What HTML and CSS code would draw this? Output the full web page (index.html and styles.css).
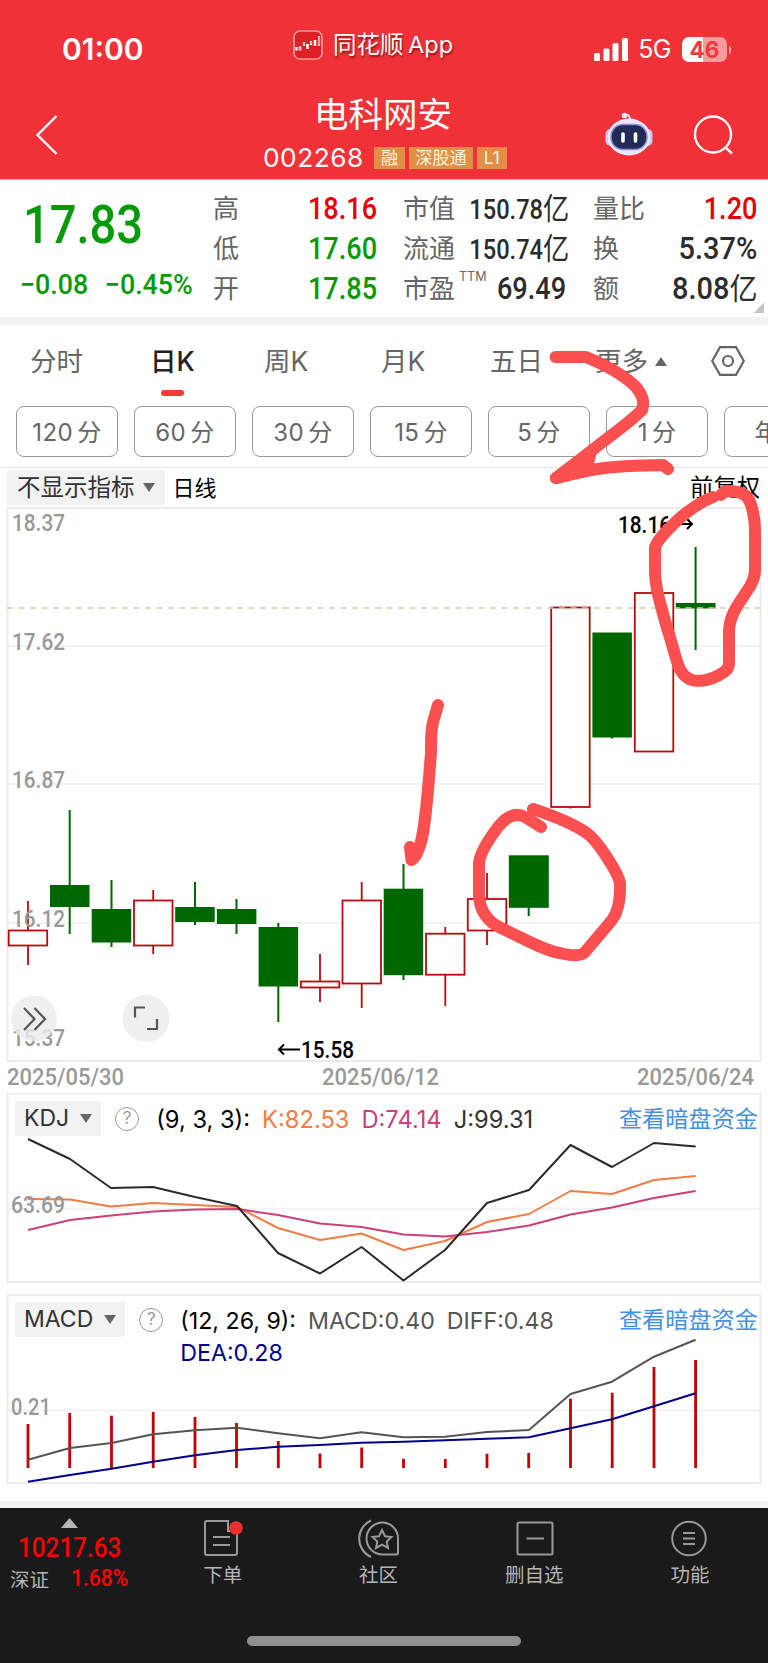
FILE: index.html
```html
<!DOCTYPE html>
<html lang="zh-CN">
<head>
    <meta charset="UTF-8">
    <title>电科网安 002268</title>
    <link rel="stylesheet" href="styles.css">
</head>
<body>
<div class="page">
    <!-- 顶部：状态栏 + 标题 -->
    <div class="header">
        <div class="status">
            <span class="time">01:00</span>
            <div class="app">
                <svg width="30" height="30" viewBox="0 0 30 30">
                    <rect x="1" y="1" width="28" height="28" rx="6" fill="#dd2026" stroke="#f79a9c" stroke-width="1.6"/>
                    <path d="M3.500 17v3.500M11 12v4M18 11v4M26 6v10" stroke="#fff" stroke-width="2.200"/>
                    <path d="M7 16.500v4M14.500 14v5M22 10v6" stroke="#fff" stroke-width="2.600"/>
                    <path d="M7 18v2M11 13v2M18 12v2M26 7v8" stroke="#dd2026" stroke-width=".8"/>
                </svg>
                <span>同花顺 App</span>
            </div>
            <div class="net">
                <svg width="35" height="23" viewBox="0 0 35 23" fill="#fff">
                    <rect x="0" y="15" width="6" height="8" rx="1.500"/>
                    <rect x="9.500" y="10.500" width="6" height="12.500" rx="1.500"/>
                    <rect x="18.500" y="5" width="6" height="18" rx="1.500"/>
                    <rect x="28" y="0" width="6" height="23" rx="1.500"/>
                </svg>
                <span class="g5">5G</span>
                <span class="battery">46</span>
            </div>
        </div>
        <div class="nav">
            <svg class="back" width="24" height="42" viewBox="0 0 24 42"><path d="M21.500 2L2.500 21l19 19" fill="none" stroke="#fff" stroke-width="2.400"/></svg>
            <div class="title">
                <h1>电科网安</h1>
                <p><span class="code">002268</span><i>融</i><i>深股通</i><i>L1</i></p>
            </div>
            <div class="tools">
                <svg width="50" height="44" viewBox="0 0 50 44">
                    <path d="M21 3q5-1 5 5" fill="none" stroke="#e4e0fa" stroke-width="2"/>
                    <circle cx="20.500" cy="3.500" r="2.800" fill="#f3f0ff"/>
                    <rect x="1.500" y="17" width="10" height="17" rx="5" fill="#c9c8f5"/>
                    <rect x="38.500" y="17" width="10" height="17" rx="5" fill="#c9c8f5"/>
                    <ellipse cx="25" cy="25" rx="21.500" ry="18.500" fill="#ebe8fb"/>
                    <rect x="7" y="12.500" width="36" height="25" rx="12" fill="#222b54" stroke="#8e8bdc" stroke-width="1.500"/>
                    <path d="M19 22v7M31.500 22v7" stroke="#fff" stroke-width="3.600" stroke-linecap="round"/>
                </svg>
                <svg width="42" height="42" viewBox="0 0 42 42" fill="none" stroke="#fff" stroke-width="2.400">
                    <circle cx="20" cy="20.500" r="18"/><path d="M32 33l7 6.500"/>
                </svg>
            </div>
        </div>
    </div>

    <!-- 行情 -->
    <div class="quote">
        <div class="price">
            <b>17.83</b>
            <p><span>−0.08</span><span>−0.45%</span></p>
        </div>
        <ul class="c1">
            <li>高<em class="red">18.16</em></li>
            <li>低<em class="green">17.60</em></li>
            <li>开<em class="green">17.85</em></li>
        </ul>
        <ul class="c2">
            <li>市值<em class="small">150.78<u>亿</u></em></li>
            <li>流通<em class="small">150.74<u>亿</u></em></li>
            <li>市盈<sup>TTM</sup><em>69.49</em></li>
        </ul>
        <ul class="c3">
            <li>量比<em class="red">1.20</em></li>
            <li>换<em class="wide">5.37%</em></li>
            <li>额<em class="wide">8.08<u>亿</u></em></li>
        </ul>
    </div>

    <!-- 周期 -->
    <div class="tabs">
        <span>分时</span><span class="current">日K</span><span>周K</span><span>月K</span><span>五日</span>
        <span class="more">更多<svg width="12" height="9" viewBox="0 0 12 9"><path d="M6 0l6 9H0z" fill="#666"/></svg></span>
        <svg class="set" width="34" height="30" viewBox="0 0 34 30" fill="none" stroke="#666" stroke-width="2.200">
            <path d="M9 1.200h16L32.800 15 25 28.800H9L1.200 15z"/><circle cx="17" cy="15" r="5"/>
        </svg>
    </div>
    <div class="mins">
        <span>120 分</span><span>60 分</span><span>30 分</span><span>15 分</span><span>5 分</span><span>1 分</span><span>年K</span>
    </div>
    <div class="bar">
        <span class="select">不显示指标<s></s></span>
        <span class="line">日线</span>
        <span class="fq">前复权</span>
    </div>

    <!-- K线 -->
    <svg class="kline" width="768" height="586" viewBox="0 507 768 586">
        <path class="grid" d="M7 646H761M7 784H761M7 923H761"/>
        <rect class="frame" x="7.500" y="508" width="753" height="553"/>
        <g class="down">
            <path d="M69.700 810V934M111.500 880V947M195 882V925M236.500 899V934M278.300 923V1022M403.500 864V980M528.700 860V916M612.200 640V738.500M695.600 547V650"/>
            <rect x="50" y="885" width="39.500" height="22"/>
            <rect x="91.700" y="909" width="39.500" height="33.500"/>
            <rect x="175.200" y="907" width="39.500" height="15"/>
            <rect x="216.900" y="909" width="39.500" height="15"/>
            <rect x="258.600" y="927" width="39.500" height="59.500"/>
            <rect x="383.700" y="888.700" width="39.500" height="86.500"/>
            <rect x="508.800" y="855.300" width="40" height="52.500"/>
            <rect x="592.400" y="632.500" width="39.500" height="105"/>
            <rect x="675.800" y="603" width="39.700" height="5.500"/>
        </g>
        <g class="up">
            <path d="M28 901V930M28 946V965M153.200 890V900M153.200 946V954M320 954V981M320 988V1002M361.700 882V900M361.700 984V1008M445.300 927V933M445.300 975V1006M487 873V898M487 931V945M570.400 807V808.500"/>
            <rect x="8.700" y="930.500" width="38.500" height="15"/>
            <rect x="134" y="900.500" width="38.500" height="45"/>
            <rect x="300.800" y="981.500" width="38.500" height="6"/>
            <rect x="342.500" y="900.500" width="38.500" height="83"/>
            <rect x="426" y="933.700" width="38.500" height="41"/>
            <rect x="467.800" y="899" width="38.500" height="31.500"/>
            <rect x="551.200" y="607.500" width="38.500" height="199.500"/>
            <rect x="634.800" y="593" width="38.500" height="158.500"/>
        </g>
        <path d="M7 608H761" stroke="#d6cbb0" stroke-width="1.300" stroke-dasharray="6 5.500"/>
        <g class="axis">
            <text x="12" y="531" textLength="53" lengthAdjust="spacingAndGlyphs">18.37</text>
            <text x="12" y="650" textLength="53" lengthAdjust="spacingAndGlyphs">17.62</text>
            <text x="12" y="788" textLength="53" lengthAdjust="spacingAndGlyphs">16.87</text>
            <text x="12" y="926.500" textLength="53" lengthAdjust="spacingAndGlyphs">16.12</text>
            <text x="12" y="1045.500" textLength="53" lengthAdjust="spacingAndGlyphs">15.37</text>
            <text x="7" y="1084.500" textLength="117" lengthAdjust="spacingAndGlyphs">2025/05/30</text>
            <text x="322" y="1084.500" textLength="117" lengthAdjust="spacingAndGlyphs">2025/06/12</text>
            <text x="637" y="1084.500" textLength="117" lengthAdjust="spacingAndGlyphs">2025/06/24</text>
        </g>
        <g class="mark">
            <text x="301" y="1058" textLength="53" lengthAdjust="spacingAndGlyphs">15.58</text>
            <text x="618" y="532.500" textLength="53" lengthAdjust="spacingAndGlyphs">18.16</text>
            <path d="M300 1049.500H279M284 1044.500l-5 5 5 5M672 524H692M687 519l5 5-5 5"/>
        </g>
        <!-- 左下角按钮 -->
        <g class="btn">
            <circle cx="34" cy="1018.500" r="23"/><circle cx="146" cy="1018.500" r="23.500"/>
            <path d="M24 1008l10.500 11L24 1030M34.500 1008l10.500 11-10.500 11M135 1017.500V1007.500H145M147 1029H157V1019"/>
        </g>
    </svg>

    <!-- KDJ -->
    <div class="panel kdj">
        <div class="head">
            <span class="select">KDJ<s></s></span><span class="ask">?</span>
            <div class="vals"><span>(9, 3, 3):</span><span class="k">K:82.53</span><span class="d">D:74.14</span><span class="j">J:99.31</span></div>
            <a>查看暗盘资金</a>
        </div>
        <svg width="768" height="190" viewBox="0 1093 768 190">
            <path class="grid" d="M7 1209H761"/>
            <rect class="frame" x="7.500" y="1093.500" width="753" height="188.500"/>
            <g class="curve">
                <polyline stroke="#f47b43" points="28,1199 70,1199.500 111,1206.500 153,1203 195,1205 237,1207 278,1228 320,1240 361.500,1233.500 403.500,1250 445,1241 487,1222 529,1214 570.500,1191 612,1194 654,1180 695.600,1176"/>
                <polyline stroke="#cc3f78" points="28,1230 70,1220 111,1215.500 153,1211.500 195,1209.500 237,1209 278,1215 320,1223.500 361.500,1227 403.500,1234.500 445,1236.500 487,1232 529,1225.500 570.500,1214.500 612,1207.500 654,1198 695.600,1191"/>
                <polyline stroke="#2b2b2b" points="28,1139 70,1159 111,1188 153,1187 195,1197 237,1206 278,1253 320,1273.500 361.500,1247 403.500,1280.500 445,1250 487,1203 529,1190 570.500,1145 612,1167 654,1143 695.600,1146.500"/>
            </g>
            <g class="axis"><text x="11" y="1213" textLength="54" lengthAdjust="spacingAndGlyphs">63.69</text></g>
        </svg>
    </div>

    <!-- MACD -->
    <div class="panel macd">
        <div class="head">
            <span class="select">MACD<s></s></span><span class="ask">?</span>
            <div class="vals"><span>(12, 26, 9):</span><span class="m">MACD:0.40</span><span class="m">DIFF:0.48</span><br><span class="dea">DEA:0.28</span></div>
            <a>查看暗盘资金</a>
        </div>
        <svg width="768" height="190" viewBox="0 1294 768 190">
            <path class="grid" d="M7 1410.500H761"/>
            <rect class="frame" x="7.500" y="1295" width="753" height="188"/>
            <path d="M28 1424V1468M69.700 1413V1468M111.500 1415.700V1468M153.200 1412V1468M195 1417V1468M236.500 1423V1468M278.300 1441V1468M320 1453.500V1468M361.700 1447.500V1468M403.500 1458.700V1468M445.300 1459V1468M487 1453.700V1468M528.700 1453V1468M570.500 1398.700V1468M612.200 1392.700V1468M654 1367V1468M695.600 1360V1468" stroke="#c40000" stroke-width="2.800"/>
            <g class="curve">
                <polyline stroke="#555" points="28,1459.700 70,1448 111.500,1443 153,1434.300 195,1430.300 237,1427.700 278,1433.300 320,1438.300 361.500,1432.300 403.500,1437.300 445,1436.700 487,1432 529,1430 570.500,1394 612,1381.700 654,1356.700 695.600,1339.700"/>
                <polyline stroke="#00008b" points="28,1481.700 70,1475 111.500,1468.700 153,1461.700 195,1455.300 237,1450 278,1446.700 320,1445 361.500,1442.700 403.500,1441.700 445,1440.300 487,1438.700 529,1437.300 570.500,1428.300 612,1419.300 654,1406.300 695.600,1393.300"/>
            </g>
            <g class="axis"><text x="11" y="1414.500" textLength="40" lengthAdjust="spacingAndGlyphs">0.21</text></g>
        </svg>
    </div>

    <!-- 底部 -->
    <div class="footer">
        <div class="index">
            <svg width="17" height="10" viewBox="0 0 17 10"><path d="M8.500 0L17 10H0z" fill="#b5b5b5"/></svg>
            <b>10217.63</b>
            <p>深证<b>1.68%</b></p>
        </div>
        <div class="item">
            <svg width="42" height="40" viewBox="0 0 42 40">
                <path d="M25 3H5Q3 3 3 5V35Q3 37 5 37H33Q35 37 35 35V13H26V3zM11 19H28M11 27H28"/>
                <circle cx="34" cy="10" r="6.800" fill="#ee2f30" stroke="none"/>
            </svg>
            <span>下单</span>
        </div>
        <div class="item">
            <svg width="42" height="40" viewBox="0 0 42 40">
                <path d="M24.500 4.500a16 16 0 1 0 0 32H38q2 0 2-2V20.500a15.500 16 0 0 0-15.500-16zM13 2.500a20 20 0 0 0 0 36.500"/>
                <path d="M24 12l3 6.200 6.500.8-4.800 4.500 1.300 6.500-6-3.300-6 3.300 1.300-6.500-4.800-4.500 6.500-.8z"/>
            </svg>
            <span>社区</span>
        </div>
        <div class="item">
            <svg width="42" height="40" viewBox="0 0 42 40"><path d="M6 4.500H38Q39.500 4.500 39.500 6V35Q39.500 36.500 38 36.500H6Q4.500 36.500 4.500 35V6Q4.500 4.500 6 4.500zM13.500 20.500H31"/></svg>
            <span>删自选</span>
        </div>
        <div class="item">
            <svg width="42" height="40" viewBox="0 0 42 40"><circle cx="20" cy="20.500" r="16.800"/><path d="M14 15H26M14 20.500H26M14 26H26"/></svg>
            <span>功能</span>
        </div>
        <div class="home"></div>
    </div>

    <!-- 手绘标注 -->
    <svg class="pen" width="768" height="1663" viewBox="0 0 768 1663">
        <path d="M555.500 357H586Q620 371 636 387C646 400 643 405 642 410C628 424 606 439 595 448L556 478C585 472 590 466 663 465L668 469"/>
        <path d="M556 478L590 456L586 468z"/>
        <path d="M438 705C432 726 431 724 431 753C428 790 425 835 419 848Q416 857 411.500 860L410 847"/>
        <path d="M541 827L525 817Q512 810 498 827Q480 851 479 863V895Q480 918 501 928C525 939 545 951 560 953Q580 958 585 952L612 920Q621 908 620 883Q619 876 608 859Q596 840 588 834C575 824 551 815 533 809"/>
        <path d="M721 495L725 491Q746 490 750 502Q755 515 755 533V570Q755 580 747 591C738 605 729 615 729 633V663Q729 669 724 672C708 683 692 683 685 676C677 669 676 655 667 628C661 606 655 588 655 570V548C656 540 685 508 713 497"/>
    </svg>
</div>
</body>
</html>
```
FILE: styles.css
```css
* {
    margin: 0;
    padding: 0;
    box-sizing: border-box;
}

body {
    width: 768px;
    font-family: Inter, "Noto Sans CJK SC", sans-serif;
    background: #fff;
}

ul {
    list-style: none;
}

i, em {
    font-style: normal;
}

u, s {
    text-decoration: none;
}

svg {
    display: block;
    flex-shrink: 0;
}

.page {
    position: relative;
    width: 768px;
    height: 1663px;
    overflow: hidden;
    white-space: nowrap;
}

/* 顶部 */
.header {
    height: 180px;
    padding-top: 28px;
    background: #f13138;
    color: #fff;
    border-bottom: 1px solid #dcb0a8;
}

.status {
    display: flex;
    height: 40px;
    padding: 0 38px 0 62px;
    line-height: 40px;
}

.time {
    width: 231px;
    font-size: 30px;
    font-weight: 600;
    letter-spacing: 0;
    line-height: 43px;
}

.app {
    display: flex;
    gap: 10px;
    padding-top: 2px;
    font-size: 23.5px;
    line-height: 30px;
    word-spacing: -2px;
    text-shadow: 1px 2px 2px rgba(80, 0, 0, .6);
}

.net {
    display: flex;
    align-items: center;
    height: 42px;
    margin-left: auto;
}

.g5 {
    margin-left: 9px;
    font-size: 25px;
    letter-spacing: -.5px;
    line-height: 44px;
}

.battery {
    position: relative;
    width: 45px;
    height: 25px;
    margin-left: 11px;
    border-radius: 7px;
    background: linear-gradient(90deg, #fff 46%, #f99a9d 46%);
    color: #ee3a40;
    font-size: 22.5px;
    font-weight: 700;
    line-height: 25px;
    text-align: center;
}

.battery::after {
    content: "";
    position: absolute;
    right: -4px;
    top: 9px;
    width: 2px;
    height: 8px;
    border-radius: 0 3px 3px 0;
    background: #f99a9d;
}

.net {
    margin-right: 3px;
}

.nav {
    display: flex;
    height: 111px;
    padding: 0 33px 0 35px;
}

.back {
    margin-top: 46px;
}

.title {
    flex: 1;
    padding: 25px 0 0 204px;
}

.title h1 {
    padding-left: 51px;
    font-size: 34.5px;
    font-weight: 400;
    line-height: 44px;
}

.title p {
    display: flex;
    align-items: center;
    height: 22px;
    margin-top: 9px;
}

.code {
    width: 108px;
    font-size: 26.3px;
    letter-spacing: .5px;
}

.title i {
    height: 22px;
    margin: 1px 4px 0 0;
    padding: 0 6px;
    background: #e28f46;
    font-size: 17.2px;
    line-height: 21px;
    color: #fff3e0;
}

.title i:first-of-type {
    margin-left: 3px;
    padding: 0 7px;
}

.title i:last-child {
    padding: 0 7px;
}

.tools {
    display: flex;
    gap: 39px;
    padding-top: 44px;
}

.tools svg:last-child {
    margin-top: 2px;
}

/* 行情 */
.quote {
    position: relative;
    display: flex;
    height: 145px;
    padding: 10px 11px 0 22px;
    border-bottom: 8px solid #f4f4f4;
    color: #666;
    font-size: 26px;
}

/* 右下角小三角 */
.quote::after {
    content: "";
    position: absolute;
    right: 4px;
    bottom: 4px;
    width: 10px;
    height: 10px;
    background: linear-gradient(135deg, transparent 50%, #c4c4c4 50%);
}

.price {
    width: 191px;
    padding-top: 9px;
    color: #069a0a;
    font-family: Roboto, sans-serif;
}

.price b {
    display: block;
    margin-left: 1px;
    font-size: 53.5px;
    font-weight: 500;
    line-height: 52px;
    transform: scaleX(.88);
    transform-origin: left;
}

.price p {
    display: flex;
    gap: 17px;
    margin-top: 19px;
    margin-left: -2px;
    font-size: 27.5px;
    line-height: 30px;
    font-weight: 500;
    transform: scaleX(.975);
    transform-origin: left;
}

.quote ul {
    width: 164px;
}

.quote .c2 {
    width: 163px;
    margin-left: 26px;
}

.quote .c3 {
    width: 164px;
    margin-left: 27px;
}

.quote li {
    position: relative;
    display: flex;
    height: 40px;
    line-height: 38px;
}

.quote em {
    margin-left: auto;
    color: #2c2c2c;
    font-family: Roboto, "Noto Sans CJK SC", sans-serif;
    font-size: 31px;
    font-weight: 500;
    transform: scaleX(.875);
    transform-origin: right;
}

.quote em.small {
    margin-right: 1px;
    font-size: 27px;
}

.quote em.wide {
    transform: scaleX(.935);
}

.quote u {
    font-size: 30px;
    font-weight: 400;
}

.quote em.red {
    color: #e80008;
}

.quote em.green {
    color: #069a0a;
}

.quote sup {
    position: absolute;
    left: 56px;
    top: -11px;
    font-size: 12.5px;
    line-height: 36px;
}

/* 周期 */
.tabs {
    position: relative;
    display: flex;
    height: 81px;
    padding-left: 30px;
    color: #666;
    font-size: 26.5px;
    line-height: 72px;
}

.tabs span {
    width: 114px;
}

.tabs span:first-child {
    width: 120px;
}

.tabs .current {
    position: relative;
    color: #222;
    font-weight: 500;
}

.tabs .current::after {
    content: "";
    position: absolute;
    left: 11px;
    top: 65px;
    width: 23px;
    height: 6px;
    border-radius: 3px;
    background: #fa3932;
}

.tabs span:nth-child(3) {
    width: 117px;
}

.tabs span:nth-child(4) {
    width: 109px;
}

.tabs span:nth-child(5) {
    width: 105px;
}

.tabs .more {
    display: flex;
    align-items: center;
    gap: 7px;
    height: 72px;
    width: 116px;
}

.set {
    margin-top: 21px;
}

.mins {
    display: flex;
    gap: 16px;
    height: 62px;
    padding-left: 16px;
    overflow: hidden;
    border-bottom: 1px solid #e6e6e6;
}

.mins span {
    flex: 0 0 102px;
    height: 51px;
    border: 1px solid #999;
    border-radius: 8px;
    color: #666;
    font-size: 24px;
    letter-spacing: .4px;
    word-spacing: -3px;
    line-height: 51px;
    text-align: center;
}

.bar {
    display: flex;
    height: 39px;
    padding: 2px 8px 0 7px;
    font-size: 22.5px;
    line-height: 37px;
}

.select {
    display: flex;
    align-items: center;
    gap: 8px;
    height: 35px;
    padding: 0 10px;
    background: #f2f2f2;
    color: #333;
    font-size: 23.5px;
}

.select s {
    border: 6px solid transparent;
    border-top: 9px solid #666;
    border-bottom: 0;
}

.line {
    margin-left: 8px;
    font-size: 22px;
}

.fq {
    margin-left: auto;
    font-size: 23.3px;
    line-height: 35px;
}

/* 图表 */
.grid {
    fill: none;
    stroke: #eeeff1;
    stroke-width: 1.5;
}

.frame {
    fill: none;
    stroke: #ebebeb;
    stroke-width: 2;
}

.down {
    fill: #006600;
    stroke: none;
}

.down path {
    stroke: #006600;
    stroke-width: 2;
}

.up {
    fill: #fff;
    stroke: #b80a0e;
    stroke-width: 1.8;
}

.axis {
    fill: #999;
    font-family: Roboto, sans-serif;
    font-size: 23.5px;
    font-weight: 500;
    font-kerning: none;
}

.mark {
    fill: #000;
    font-family: Roboto, sans-serif;
    font-size: 23.5px;
    font-weight: 500;
    font-kerning: none;
}

.mark path {
    fill: none;
    stroke: #000;
    stroke-width: 2;
}

.btn {
    fill: #ebebeb;
    fill-opacity: .8;
}

.btn path {
    fill: none;
    stroke: #555;
    stroke-width: 2.2;
}

.curve {
    fill: none;
    stroke-width: 2;
    stroke-linejoin: round;
}

/* 指标面板 */
.panel {
    position: relative;
    height: 190px;
}

.macd {
    margin-top: 11px;
}

.head {
    position: absolute;
    left: 15px;
    top: 8px;
    width: 743px;
    display: flex;
    z-index: 1;
    font-size: 23.2px;
    line-height: 37px;
}

.head .select {
    gap: 11px;
    height: 35px;
    padding: 0 9px;
    font-size: 23px;
}

.ask {
    width: 24px;
    height: 24px;
    margin: 6px 17px 0 14px;
    border: 1.5px solid #999;
    border-radius: 50%;
    color: #999;
    font-size: 17px;
    line-height: 21px;
    text-align: center;
}

.vals span {
    margin-right: 12px;
}

.vals {
    line-height: 32px;
    padding-top: 3px;
}

.kdj .vals {
    font-size: 23.7px;
}

.k {
    color: #f47b43;
}

.d {
    color: #cc3f78;
}

.j {
    color: #333;
}

.m {
    color: #555;
}

.dea {
    color: #00008b;
}

.head a {
    margin-left: auto;
    color: #4390e6;
}

/* 底部 */
.footer {
    position: relative;
    display: flex;
    height: 155px;
    margin-top: 24px;
    background: #1a1a1a;
    box-shadow: 0 -7px 0 #f3f3f3;
    color: #b5b5b5;
    font-size: 19.5px;
}

.index {
    width: 145px;
    padding: 10px 0 0 10px;
}

.index svg {
    margin-left: 51px;
}

.index b {
    display: block;
    color: #f00;
    font-family: Roboto, sans-serif;
    font-size: 27px;
    font-weight: 500;
    line-height: 30px;
    transform: scaleX(.9);
    transform-origin: left;
}

.index > b {
    margin: 5px 0 0 8px;
}

.index p {
    display: flex;
    gap: 22px;
    line-height: 34px;
}

.index p b {
    font-size: 24.5px;
    transform: scaleX(.86);
}

.item {
    flex: 1;
    display: flex;
    flex-direction: column;
    align-items: center;
    padding-top: 10px;
}

.item svg {
    fill: none;
    stroke: #999;
    stroke-width: 2;
}

.item span {
    margin-top: 3px;
    line-height: 28px;
}

.home {
    position: absolute;
    left: 247px;
    bottom: 17px;
    width: 274px;
    height: 10px;
    border-radius: 5px;
    background: #909090;
}

.pen {
    position: absolute;
    left: 0;
    top: 0;
    z-index: 2;
    fill: none;
    stroke: #fc5050;
    stroke-width: 12;
    stroke-linecap: round;
    stroke-linejoin: round;
}
```
